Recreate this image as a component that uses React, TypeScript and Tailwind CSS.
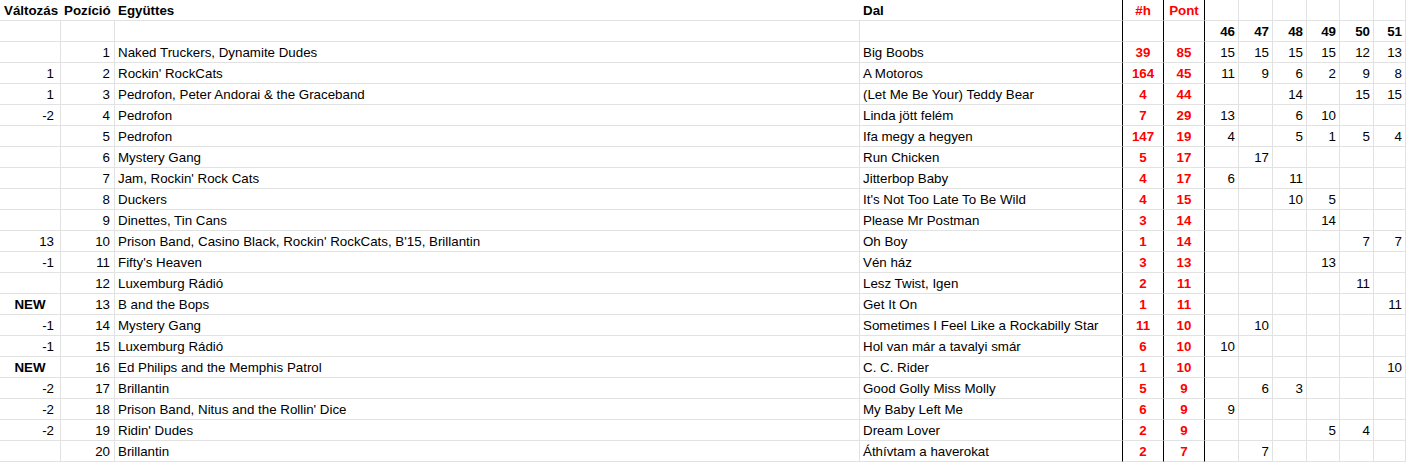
import * as React from "react";

type Row = {
  change: string;
  pos: number;
  band: string;
  song: string;
  plays: number;
  points: number;
  weeks: (number | "")[];
};

const rows: Row[] = [
  { change: "", pos: 1, band: "Naked Truckers, Dynamite Dudes", song: "Big Boobs", plays: 39, points: 85, weeks: [15, 15, 15, 15, 12, 13] },
  { change: "1", pos: 2, band: "Rockin' RockCats", song: "A Motoros", plays: 164, points: 45, weeks: [11, 9, 6, 2, 9, 8] },
  { change: "1", pos: 3, band: "Pedrofon, Peter Andorai & the Graceband", song: "(Let Me Be Your) Teddy Bear", plays: 4, points: 44, weeks: ["", "", 14, "", 15, 15] },
  { change: "-2", pos: 4, band: "Pedrofon", song: "Linda jött felém", plays: 7, points: 29, weeks: [13, "", 6, 10, "", ""] },
  { change: "", pos: 5, band: "Pedrofon", song: "Ifa megy a hegyen", plays: 147, points: 19, weeks: [4, "", 5, 1, 5, 4] },
  { change: "", pos: 6, band: "Mystery Gang", song: "Run Chicken", plays: 5, points: 17, weeks: ["", 17, "", "", "", ""] },
  { change: "", pos: 7, band: "Jam, Rockin' Rock Cats", song: "Jitterbop Baby", plays: 4, points: 17, weeks: [6, "", 11, "", "", ""] },
  { change: "", pos: 8, band: "Duckers", song: "It's Not Too Late To Be Wild", plays: 4, points: 15, weeks: ["", "", 10, 5, "", ""] },
  { change: "", pos: 9, band: "Dinettes, Tin Cans", song: "Please Mr Postman", plays: 3, points: 14, weeks: ["", "", "", 14, "", ""] },
  { change: "13", pos: 10, band: "Prison Band, Casino Black, Rockin' RockCats, B'15, Brillantin", song: "Oh Boy", plays: 1, points: 14, weeks: ["", "", "", "", 7, 7] },
  { change: "-1", pos: 11, band: "Fifty's Heaven", song: "Vén ház", plays: 3, points: 13, weeks: ["", "", "", 13, "", ""] },
  { change: "", pos: 12, band: "Luxemburg Rádió", song: "Lesz Twist, Igen", plays: 2, points: 11, weeks: ["", "", "", "", 11, ""] },
  { change: "NEW", pos: 13, band: "B and the Bops", song: "Get It On", plays: 1, points: 11, weeks: ["", "", "", "", "", 11] },
  { change: "-1", pos: 14, band: "Mystery Gang", song: "Sometimes I Feel Like a Rockabilly Star", plays: 11, points: 10, weeks: ["", 10, "", "", "", ""] },
  { change: "-1", pos: 15, band: "Luxemburg Rádió", song: "Hol van már a tavalyi smár", plays: 6, points: 10, weeks: [10, "", "", "", "", ""] },
  { change: "NEW", pos: 16, band: "Ed Philips and the Memphis Patrol", song: "C. C. Rider", plays: 1, points: 10, weeks: ["", "", "", "", "", 10] },
  { change: "-2", pos: 17, band: "Brillantin", song: "Good Golly Miss Molly", plays: 5, points: 9, weeks: ["", 6, 3, "", "", ""] },
  { change: "-2", pos: 18, band: "Prison Band, Nitus and the Rollin' Dice", song: "My Baby Left Me", plays: 6, points: 9, weeks: [9, "", "", "", "", ""] },
  { change: "-2", pos: 19, band: "Ridin' Dudes", song: "Dream Lover", plays: 2, points: 9, weeks: ["", "", "", 5, 4, ""] },
  { change: "", pos: 20, band: "Brillantin", song: "Áthívtam a haverokat", plays: 2, points: 7, weeks: ["", 7, "", "", "", ""] },
];

const weekNums = [46, 47, 48, 49, 50, 51];

// grid cell: bottom gridline always, right edge passed in
const Cell = ({
  children,
  className = "",
}: {
  children?: React.ReactNode;
  className?: string;
}) => (
  <div
    className={
      "h-[21px] border-b border-b-[#e2e2e2] leading-[22px] whitespace-nowrap overflow-hidden " +
      className
    }
  >
    {children}
  </div>
);

const gray = "border-r border-r-[#e2e2e2]";
const black = "border-r border-r-black";

export default function App() {
  return (
    <div className="w-[1406px] h-[462px] overflow-hidden bg-white text-black text-[13.33px] font-['Liberation_Sans',Arial,sans-serif]">
      <div className="grid grid-cols-[61px_54px_745px_263px_41px_41px_34px_34px_34px_33px_34px_32px]">
        {/* header row */}
        <Cell className="pl-[4px] font-bold">Változás</Cell>
        <Cell className="pl-[3px] font-bold">Pozíció</Cell>
        <Cell className="pl-[3px] font-bold">Együttes</Cell>
        <Cell className={`${black} pl-[3px] font-bold`}>Dal</Cell>
        <Cell className={`${black} text-center font-bold text-[#ff0000]`}>#h</Cell>
        <Cell className={`${black} text-center font-bold text-[#ff0000]`}>Pont</Cell>
        {weekNums.map((w) => (
          <Cell key={`h${w}`} className={gray} />
        ))}

        {/* week numbers */}
        <Cell className={gray} />
        <Cell className={gray} />
        <Cell className={gray} />
        <Cell className={black} />
        <Cell className={black} />
        <Cell className={black} />
        {weekNums.map((w) => (
          <Cell key={w} className={`${gray} text-right pr-[3px] font-bold`}>
            {w}
          </Cell>
        ))}

        {rows.map((r) => (
          <React.Fragment key={r.pos}>
            {r.change === "NEW" ? (
              <Cell className={`${gray} text-center font-bold`}>NEW</Cell>
            ) : (
              <Cell className={`${gray} text-right pr-[6px]`}>{r.change}</Cell>
            )}
            <Cell className={`${gray} text-right pr-[4px]`}>{r.pos}</Cell>
            <Cell className={`${gray} pl-[3px]`}>{r.band}</Cell>
            <Cell className={`${black} pl-[3px]`}>{r.song}</Cell>
            <Cell className={`${black} text-center font-bold text-[#ff0000]`}>{r.plays}</Cell>
            <Cell className={`${black} text-center font-bold text-[#ff0000]`}>{r.points}</Cell>
            {r.weeks.map((v, i) => (
              <Cell key={i} className={`${gray} text-right pr-[3px]`}>
                {v}
              </Cell>
            ))}
          </React.Fragment>
        ))}
      </div>
    </div>
  );
}
